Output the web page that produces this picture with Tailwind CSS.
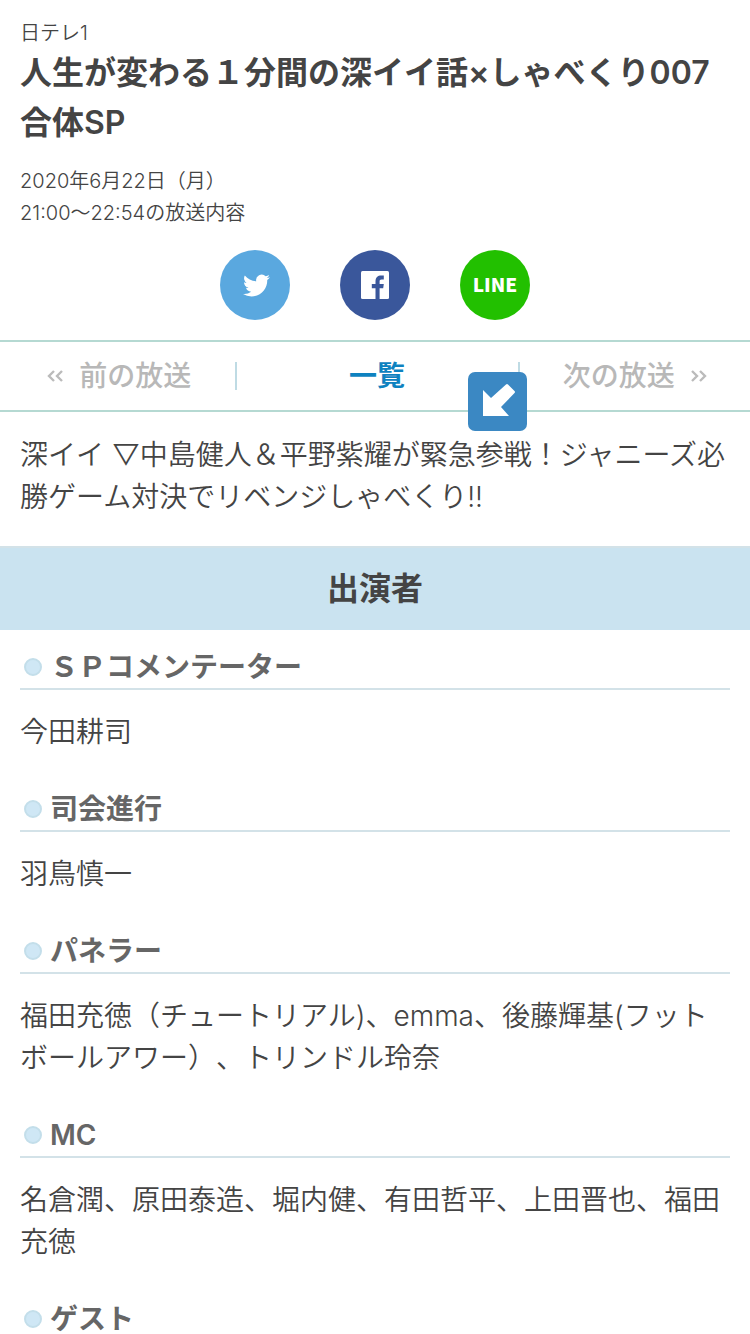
<!DOCTYPE html>
<html lang="ja">
<head>
    <meta charset="UTF-8">
    <meta name="viewport" content="width=device-width, initial-scale=1.0">
    <title>人生が変わる１分間の深イイ話×しゃべくり007 合体SP</title>
    <script src="https://cdn.jsdelivr.net/npm/@tailwindcss/browser@4"></script>
</head>
<body class="bg-white text-[#444] font-['Inter','Noto_Sans_CJK_JP',sans-serif] [text-spacing-trim:space-all] overflow-x-hidden">
    <!-- Program header -->
    <header class="px-5 pt-[18px]">
        <p class="text-[20px] leading-[30px] font-[350]">日テレ1</p>
        <h1 class="text-[32px] leading-[50px] font-semibold">人生が変わる１分間の深イイ話×しゃべくり007 合体SP</h1>
        <p class="mt-[17px] text-[20px] leading-8 font-[350]">2020年6月22日（月）<br>21:00〜22:54の放送内容</p>
    </header>

    <!-- Share buttons -->
    <div class="mt-[21px] flex justify-center gap-[50px]">
        <a href="#" aria-label="Twitter" class="flex size-[70px] items-center justify-center rounded-full bg-[#5aa8df]">
            <svg class="ml-[3px] size-[27px]" viewBox="0 0 24 24" fill="#fff">
                <path d="M23.95 4.57a10 10 0 0 1-2.82.77 4.96 4.96 0 0 0 2.16-2.72c-.95.55-2 .95-3.13 1.18a4.92 4.92 0 0 0-8.38 4.48C7.69 8.1 4.07 6.13 1.64 3.16a4.93 4.93 0 0 0 1.52 6.57 4.9 4.9 0 0 1-2.23-.61v.06a4.92 4.92 0 0 0 3.95 4.83 5 5 0 0 1-2.21.08 4.94 4.94 0 0 0 4.6 3.42A9.87 9.87 0 0 1 0 19.54a13.99 13.99 0 0 0 7.55 2.21c9.05 0 14-7.5 14-13.98 0-.21 0-.42-.02-.63a9.94 9.94 0 0 0 2.46-2.55z"/>
            </svg>
        </a>
        <a href="#" aria-label="Facebook" class="flex size-[70px] items-center justify-center rounded-full bg-[#3a579b]">
            <svg class="size-7" viewBox="0 0 28 28">
                <rect width="28" height="28" rx="1.5" fill="#fff"/>
                <path d="M14.5 28V17.2H10.8V12.9H14.5V10.2C14.5 6.4 16.8 4.4 20.2 4.4C21.4 4.4 22.4 4.5 22.8 4.5V8.4H20.7C18.9 8.4 18.6 9.3 18.6 10.6V12.9H22.8L22.2 17.2H18.6V28Z" fill="#3a579b"/>
            </svg>
        </a>
        <a href="#" class="flex size-[70px] items-center justify-center rounded-full bg-[#22c000] pb-[2px] font-['Noto_Sans_CJK_JP',sans-serif] text-[19px] font-black text-white">LINE</a>
    </div>

    <!-- Broadcast navigation -->
    <nav class="relative mt-5 flex h-[72px] items-center border-y-2 border-[#b5d9d2] text-[28px] leading-[42px] font-medium text-[#b8b8b8]">
        <span class="flex flex-1 items-center justify-center gap-4 pl-1">
            <svg class="h-3 w-4" viewBox="0 0 16 12" fill="none" stroke="#bbb" stroke-width="2.4"><path d="M7 1L2 6L7 11M15 1L10 6L15 11"/></svg>
            前の放送
        </span>
        <a href="#" class="flex h-7 w-[38%] items-center justify-center border-x-2 border-[#bfdbe4] font-bold text-[#0e82c0]">一覧</a>
        <span class="flex flex-1 items-center justify-center gap-4">
            次の放送
            <svg class="h-3 w-4" viewBox="0 0 16 12" fill="none" stroke="#bbb" stroke-width="2.4"><path d="M1 1L6 6L1 11M9 1L14 6L9 11"/></svg>
        </span>
        <svg class="absolute top-[30px] left-[62.4%] size-[59px]" viewBox="0 0 59 59">
            <rect width="59" height="59" rx="7" fill="#3b88c3"/>
            <path d="M15 44V18L23 26L38 12.5Q39 11.5 40 12.5L46.5 19Q47.5 20 46.5 21L33 35L41 44Z" fill="#fff"/>
        </svg>
    </nav>

    <p class="px-5 pt-[22px] pb-7 text-[28px] leading-[42px] font-[350]">深イイ ▽中島健人＆平野紫耀が緊急参戦！ジャニーズ必勝ゲーム対決でリベンジしゃべくり!!</p>

    <!-- Cast -->
    <h2 class="border-t-2 border-[#d3e2e8] bg-[#cae3f0] py-[17px] text-center text-[32px] leading-[48px] font-semibold">出演者</h2>
    <div class="flex flex-col gap-[35px] px-5 pt-4">
        <section>
            <h3 class="flex items-center gap-2 border-b-2 border-[#d3e2e8] pl-1 text-[28px] leading-[42px] font-semibold text-[#666]"><span class="size-[18px] rounded-full border-2 border-[#c3deea] bg-[#cfe7f5]"></span>ＳＰコメンテーター</h3>
            <p class="mt-[21px] text-[28px] leading-[42px] font-[350]">今田耕司</p>
        </section>
        <section>
            <h3 class="flex items-center gap-2 border-b-2 border-[#d3e2e8] pl-1 text-[28px] leading-[42px] font-semibold text-[#666]"><span class="size-[18px] rounded-full border-2 border-[#c3deea] bg-[#cfe7f5]"></span>司会進行</h3>
            <p class="mt-[21px] text-[28px] leading-[42px] font-[350]">羽鳥慎一</p>
        </section>
        <section>
            <h3 class="flex items-center gap-2 border-b-2 border-[#d3e2e8] pl-1 text-[28px] leading-[42px] font-semibold text-[#666]"><span class="size-[18px] rounded-full border-2 border-[#c3deea] bg-[#cfe7f5]"></span>パネラー</h3>
            <p class="mt-[21px] text-[28px] leading-[42px] font-[350]">福田充徳（チュートリアル)、emma、後藤輝基(フットボールアワー）、トリンドル玲奈</p>
        </section>
        <section>
            <h3 class="flex items-center gap-2 border-b-2 border-[#d3e2e8] pl-1 text-[28px] leading-[42px] font-semibold text-[#666]"><span class="size-[18px] rounded-full border-2 border-[#c3deea] bg-[#cfe7f5]"></span>MC</h3>
            <p class="mt-[21px] text-[28px] leading-[42px] font-[350]">名倉潤、原田泰造、堀内健、有田哲平、上田晋也、福田充徳</p>
        </section>
        <section>
            <h3 class="flex items-center gap-2 border-b-2 border-[#d3e2e8] pl-1 text-[28px] leading-[42px] font-semibold text-[#666]"><span class="size-[18px] rounded-full border-2 border-[#c3deea] bg-[#cfe7f5]"></span>ゲスト</h3>
        </section>
    </div>
</body>
</html>
